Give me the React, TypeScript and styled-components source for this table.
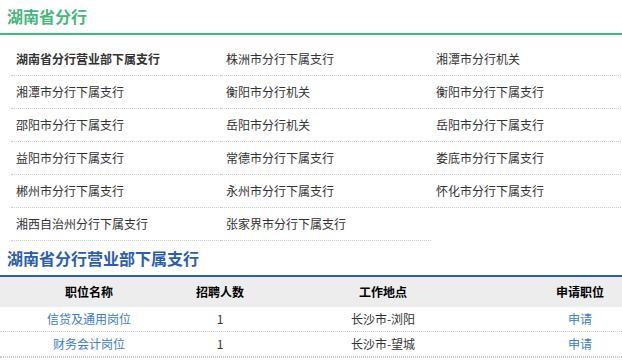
import React from 'react';
import styled, { createGlobalStyle } from 'styled-components';

const GlobalStyle = createGlobalStyle`
    html, body {
        margin: 0;
        padding: 0;
        background: #fff;
    }
    body {
        font-family: "Noto Sans CJK SC", "Liberation Sans", sans-serif;
        font-size: 12px;
        color: #333;
        overflow: hidden;
    }
`;

const Page = styled.div`
    width: 622px;
    overflow: hidden;
`;

const SectionTitle = styled.h2<{ $color: string; $height: number }>`
    margin: 0;
    padding-left: 7px;
    height: ${(p) => p.$height}px;
    line-height: ${(p) => p.$height}px;
    font-size: 16px;
    font-weight: bold;
    color: ${(p) => p.$color};
    border-bottom: 2px solid ${(p) => p.$color};
`;

const BranchGrid = styled.ul`
    list-style: none;
    margin: 8px 0 0 11px;
    padding: 0;
    display: grid;
    grid-template-columns: repeat(3, 210px);
`;

const BranchItem = styled.li<{ $main?: boolean }>`
    height: 32px;
    line-height: 32px;
    padding-left: 5px;
    border-bottom: 1px dotted #ccc;
    font-weight: ${(p) => (p.$main ? 'bold' : 'normal')};
    color: #333;
    white-space: nowrap;
`;

const JobTable = styled.div`
    width: 656px;
    border-bottom: 1px dotted #ccc;
`;

const cols = '178px 84px 242px 152px';

const HeadRow = styled.div`
    display: grid;
    grid-template-columns: ${cols};
    height: 30px;
    line-height: 30px;
    background: #ededed;
`;

const HeadCell = styled.div`
    text-align: center;
    font-weight: bold;
    color: #000;
`;

const Row = styled.div`
    display: grid;
    grid-template-columns: ${cols};
    height: 24px;
    line-height: 24px;
    border-bottom: 1px dotted #ccc;
`;

const Cell = styled.div<{ $link?: boolean }>`
    text-align: center;
    color: ${(p) => (p.$link ? '#3a7bd5' : '#333')};
    cursor: ${(p) => (p.$link ? 'pointer' : 'default')};
`;

const branches = [
    '湖南省分行营业部下属支行',
    '株洲市分行下属支行',
    '湘潭市分行机关',
    '湘潭市分行下属支行',
    '衡阳市分行机关',
    '衡阳市分行下属支行',
    '邵阳市分行下属支行',
    '岳阳市分行机关',
    '岳阳市分行下属支行',
    '益阳市分行下属支行',
    '常德市分行下属支行',
    '娄底市分行下属支行',
    '郴州市分行下属支行',
    '永州市分行下属支行',
    '怀化市分行下属支行',
    '湘西自治州分行下属支行',
    '张家界市分行下属支行',
];

const jobs = [
    { name: '信贷及通用岗位', count: 1, place: '长沙市-浏阳' },
    { name: '财务会计岗位', count: 1, place: '长沙市-望城' },
];

const App = () => {
    return (
        <Page>
            <GlobalStyle />
            <SectionTitle $color="#45b87c" $height={33}>湖南省分行</SectionTitle>
            <BranchGrid>
                {branches.map((b, i) => (
                    <BranchItem key={b} $main={i === 0}>{b}</BranchItem>
                ))}
            </BranchGrid>
            <SectionTitle $color="#2a5db5" $height={34}>湖南省分行营业部下属支行</SectionTitle>
            <JobTable>
                <HeadRow>
                    <HeadCell>职位名称</HeadCell>
                    <HeadCell>招聘人数</HeadCell>
                    <HeadCell>工作地点</HeadCell>
                    <HeadCell>申请职位</HeadCell>
                </HeadRow>
                {jobs.map((j) => (
                    <Row key={j.name}>
                        <Cell $link>{j.name}</Cell>
                        <Cell>{j.count}</Cell>
                        <Cell>{j.place}</Cell>
                        <Cell $link>申请</Cell>
                    </Row>
                ))}
            </JobTable>
        </Page>
    );
};

export default App;
